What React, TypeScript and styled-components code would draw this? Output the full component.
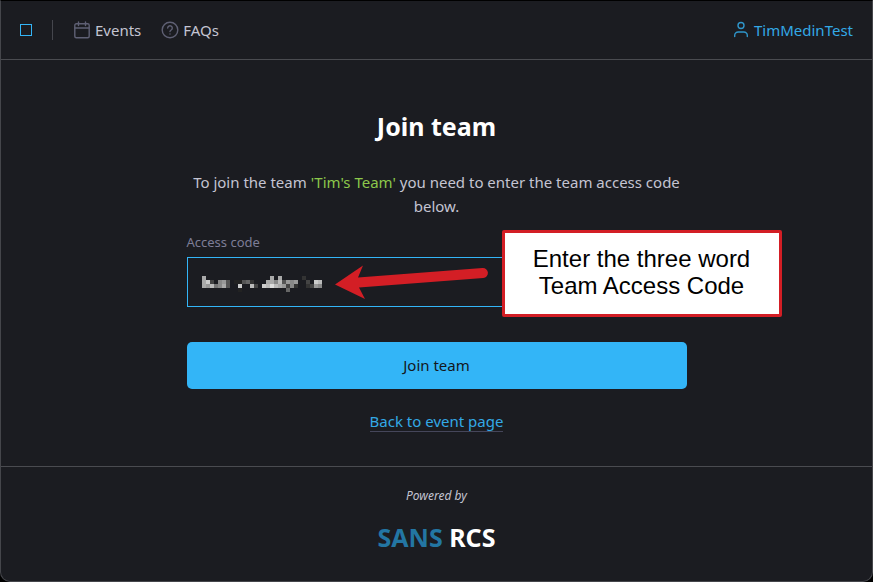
import React from "react";
import styled, { createGlobalStyle } from "styled-components";

const Global = createGlobalStyle`
  *, *::before, *::after { box-sizing: border-box; }
  html { background: #000; }
  body { margin: 0; color: #c4c4d2; font-size: 15px; line-height: 24px; }
  body, button, input { font-family: "Noto Sans", sans-serif; }
`;

const Page = styled.div`
  display: flex;
  flex-direction: column;
  min-height: 100vh;
  background: #1b1c21;
  border: 1px solid #45464b;
  border-top-color: #000;
  border-radius: 0 0 10px 10px;
`;

const Header = styled.header`
  display: flex;
  align-items: center;
  justify-content: space-between;
  height: 59px;
  padding: 0 19px;
  border-bottom: 1px solid #4a4b50;
`;

const Nav = styled.nav`
  display: flex;
  align-items: center;
  gap: 20px;
`;

const Home = styled.a`
  width: 12px;
  height: 12px;
  border: 1px solid #33b5f7;
`;

const Divider = styled.span`
  width: 1px;
  height: 20px;
  background: #45464d;
`;

const NavLink = styled.a<{ $accent?: boolean }>`
  display: flex;
  align-items: center;
  gap: 4px;
  color: ${(p) => (p.$accent ? "#33a9e6" : "#c4c4d2")};
  text-decoration: none;
`;

const Icon = styled.svg<{ $accent?: boolean }>`
  width: 18px;
  height: 18px;
  fill: none;
  stroke: ${(p) => (p.$accent ? "#2f96cb" : "#5f6074")};
  stroke-width: 1.4;
  stroke-linecap: round;
  stroke-linejoin: round;
`;

const Main = styled.main`
  flex: 1;
  width: 100%;
  max-width: 500px;
  margin: 0 auto;
  text-align: center;
`;

const Title = styled.h1`
  margin: 48px 0 26px;
  color: #fff;
  font-size: 25px;
  line-height: 36px;
  font-weight: 700;
`;

const Intro = styled.p`
  margin: 0 0 13px;
`;

const Team = styled.span`
  color: #8cc84b;
`;

const Label = styled.label`
  display: block;
  margin-bottom: 4px;
  color: #7d7d96;
  font-size: 13px;
  line-height: 22px;
  text-align: left;
`;

const Field = styled.div`
  position: relative;
`;

const CodeInput = styled.input`
  display: block;
  width: 100%;
  height: 50px;
  padding: 0 14px;
  border: 1px solid #33b5f7;
  border-radius: 0;
  outline: 0;
  background: transparent;
  color: #d0d0d0;
  font-size: 15px;
`;

const Mask = styled.svg`
  position: absolute;
  left: 15px;
  top: 19px;
  width: 120px;
  height: 16px;
  pointer-events: none;
`;

const Arrow = styled.svg`
  position: absolute;
  left: 148px;
  top: 8px;
  width: 154px;
  height: 34px;
  pointer-events: none;
`;

const Callout = styled.aside`
  position: absolute;
  left: 315px;
  top: -27px;
  width: 280px;
  padding: 12px 0 15px;
  border: 3px solid #d31e25;
  border-radius: 2px;
  background: #fff;
  color: #000;
  font: 24px/27px "Liberation Sans", Arial, sans-serif;
`;

const Submit = styled.button`
  display: block;
  width: 100%;
  height: 47px;
  margin: 35px 0 20px;
  padding: 0 0 2px;
  border: 0;
  border-radius: 5px;
  background: #33b5f7;
  color: #14171c;
  font-size: 15px;
`;

const Back = styled.a`
  display: inline-block;
  border-bottom: 1px solid #45465a;
  color: #33a9e6;
  line-height: 20px;
  text-decoration: none;
`;

const Footer = styled.footer`
  padding: 18px 0 25px;
  border-top: 1px solid #4a4b50;
  text-align: center;
`;

const Powered = styled.p`
  margin: 0 0 11px;
  font-size: 12px;
  line-height: 22px;
  font-style: italic;
`;

const Brand = styled.div`
  color: #fff;
  font-size: 25px;
  line-height: 38px;
  font-weight: 700;
`;

const BrandLead = styled.span`
  color: #2376a3;
`;

const maskRows = [
  "a................a.a.....3....",
  "ac4.895.22563...aa8b5989..4.cb",
  "a9b78a5..c..b4.cbdba9483..3498",
  ".........2...........6........",
];

export default function App() {
  return (
    <>
      <Global />
      <Page>
        <Header>
          <Nav aria-label="Main">
            <Home href="#" aria-label="Home" />
            <Divider />
            <NavLink href="#events">
              <Icon viewBox="0 0 18 18" aria-hidden="true">
                <rect x="1.8" y="2.8" width="14.4" height="14" rx="1.5" />
                <path d="M1.8 7h14.4M5.5 1v3.5M12.5 1v3.5" />
              </Icon>
              Events
            </NavLink>
            <NavLink href="#faqs">
              <Icon viewBox="0 0 18 18" aria-hidden="true">
                <circle cx="9" cy="9" r="7.8" />
                <path d="M6.7 7a2.3 2.3 0 1 1 3.5 2C9.4 9.500 9 9.800 9 10.500M9 13v.1" />
              </Icon>
              FAQs
            </NavLink>
          </Nav>
          <NavLink href="#account" $accent>
            <Icon $accent viewBox="0 0 18 18" aria-hidden="true">
              <circle cx="9" cy="4.500" r="3" />
              <path d="M2.700 15.500v-1a3.500 3.500 0 0 1 3.500-3.500h5.600a3.500 3.500 0 0 1 3.500 3.500v1" />
            </Icon>
            TimMedinTest
          </NavLink>
        </Header>
        <Main>
          <Title>Join team</Title>
          <Intro>
            To join the team <Team>'Tim's Team'</Team> you need to enter the team access code below.
          </Intro>
          <Label htmlFor="code">Access code</Label>
          <Field>
            <CodeInput id="code" type="text" />
            <Mask viewBox="0 0 30 4" shapeRendering="crispEdges" aria-hidden="true">
              {maskRows.flatMap((row, y) =>
                [...row].map((c, x) =>
                  c === "." ? null : <rect key={`${x}-${y}`} x={x} y={y} width="1" height="1" fill={`#${c}${c}${c}`} />
                )
              )}
            </Mask>
            <Arrow viewBox="0 0 154 34" aria-hidden="true">
              <path d="M0 19.500 28 .5 23 12.500 147.500 3a5 5 0 0 1 .8 10L24 22.500 30 34Z" fill="#d31e25" />
            </Arrow>
            <Callout>
              Enter the three word
              <br />
              Team Access Code
            </Callout>
          </Field>
          <Submit type="button">Join team</Submit>
          <Back href="#event">Back to event page</Back>
        </Main>
        <Footer>
          <Powered>Powered by</Powered>
          <Brand>
            <BrandLead>SANS</BrandLead> RCS
          </Brand>
        </Footer>
      </Page>
    </>
  );
}
